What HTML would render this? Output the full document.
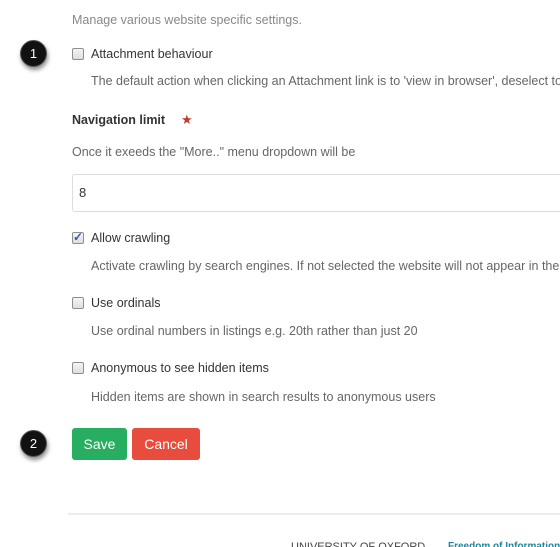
<!DOCTYPE html>
<html><head><style>
*{margin:0;padding:0;box-sizing:border-box}
html,body{width:560px;height:547px;overflow:hidden}
body{background:#fff;font-family:"Liberation Sans",Arial,sans-serif;font-size:12.5px;color:#333;position:relative}
#w{position:absolute;left:0;top:0;width:560px;height:547px;overflow:hidden}
.a{position:absolute;white-space:nowrap;line-height:16px}
.d{color:#666}
.cb{position:absolute;left:72px;width:12px;height:12px;border:1px solid #8f8f8f;border-radius:2px;background:linear-gradient(#f4f4f4,#dedede)}
.badge{position:absolute;left:20px;width:27px;height:27px;border-radius:50%;background:#111;color:#fff;font-size:13px;text-align:center;line-height:25px;box-shadow:1px 3px 4px rgba(0,0,0,.45);border:1px solid #555}
.btn{position:absolute;top:428px;height:32px;color:#fff;font-size:14px;line-height:32px;text-align:center;border-radius:3px}
</style></head><body><div id="w">
<div class="a d" style="left:72px;top:12px;color:#888">Manage various website specific settings.</div>
<div class="badge" style="top:40px">1</div>
<div class="cb" style="top:48px"></div>
<div class="a" style="left:91px;top:46px">Attachment behaviour</div>
<div class="a d" style="left:91px;top:73px">The default action when clicking an Attachment link is to 'view in browser', deselect to download instead</div>
<div class="a" style="left:72px;top:112px;font-weight:bold">Navigation limit</div>
<div class="a" style="left:181px;top:112px;color:#c0392b;font-size:13px">★</div>
<div class="a d" style="left:72px;top:144px">Once it exeeds the "More.." menu dropdown will be</div>
<div style="position:absolute;left:72px;top:174px;width:500px;height:38px;border:1px solid #ddd;border-radius:3px"></div>
<div class="a" style="left:79px;top:185px;font-size:13px">8</div>
<div class="cb" style="top:232px"></div>
<div class="a" style="left:73px;top:229px;font-size:12px;color:#3a56a8;font-weight:bold">✓</div>
<div class="a" style="left:91px;top:230px">Allow crawling</div>
<div class="a d" style="left:91px;top:258px">Activate crawling by search engines. If not selected the website will not appear in the search results</div>
<div class="cb" style="top:297px"></div>
<div class="a" style="left:91px;top:295px">Use ordinals</div>
<div class="a d" style="left:91px;top:323px">Use ordinal numbers in listings e.g. 20th rather than just 20</div>
<div class="cb" style="top:362px"></div>
<div class="a" style="left:91px;top:360px">Anonymous to see hidden items</div>
<div class="a d" style="left:91px;top:389px">Hidden items are shown in search results to anonymous users</div>
<div class="badge" style="top:430px">2</div>
<div class="btn" style="left:72px;width:55px;background:#27ae60">Save</div>
<div class="btn" style="left:132px;width:68px;background:#e74c3c">Cancel</div>
<div style="position:absolute;left:68px;top:513px;width:492px;height:2px;background:#eee"></div>
<div class="a" style="left:291px;top:539px;font-size:11px;color:#444">UNIVERSITY OF OXFORD</div>
<div class="a" style="left:448px;top:539px;font-size:10px;color:#1a8a9a;font-weight:bold">Freedom of Information</div>
</div></body></html>
